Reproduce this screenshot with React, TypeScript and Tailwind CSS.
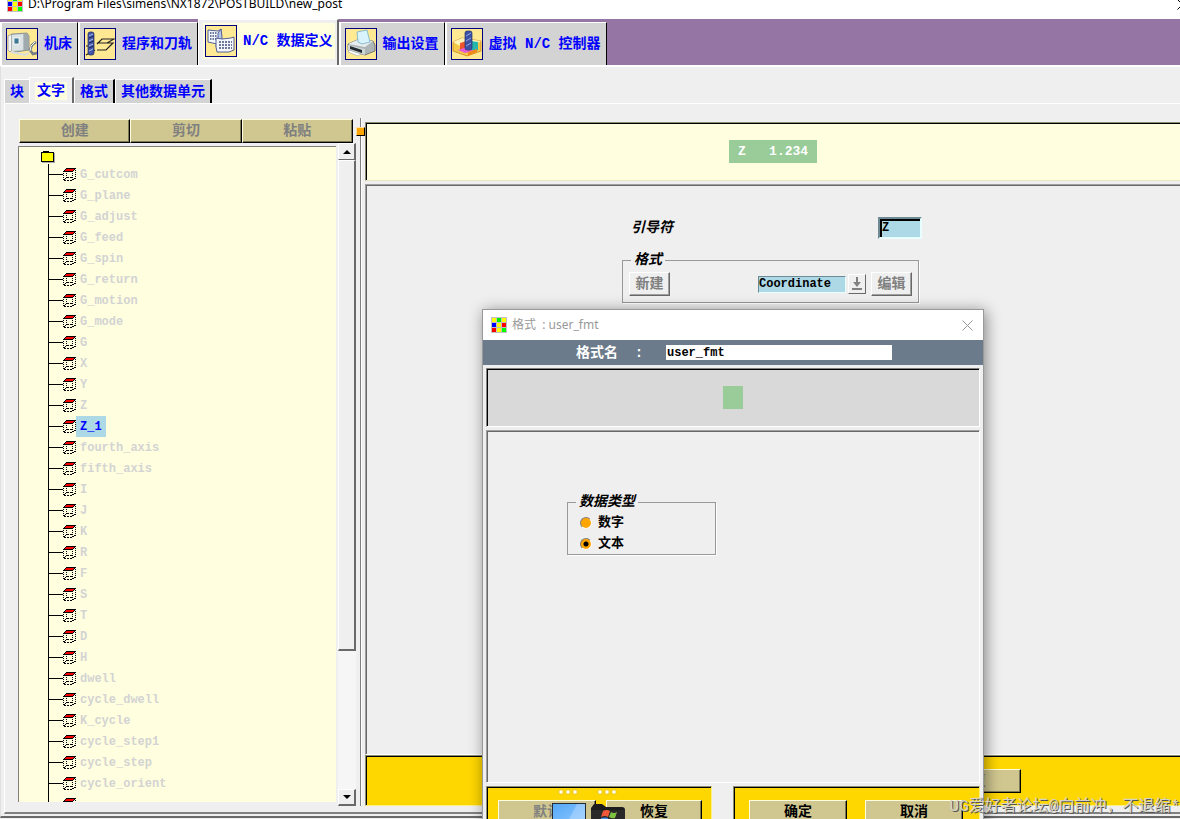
import { useState, type ReactNode } from "react";
import clsx from "clsx";

const WORDS = [
  "G_cutcom", "G_plane", "G_adjust", "G_feed", "G_spin", "G_return", "G_motion", "G_mode",
  "G", "X", "Y", "Z", "Z_1", "fourth_axis", "fifth_axis", "I", "J", "K", "R", "F", "S", "T",
  "D", "H", "dwell", "cycle_dwell", "K_cycle", "cycle_step1", "cycle_step", "cycle_orient", "",
];

const RAISED = "border border-t-white border-l-white border-r-[#696969] border-b-[#696969]";
const SUNKEN = "border border-t-[#a0a0a0] border-l-[#a0a0a0] border-r-white border-b-white shadow-[inset_1px_1px_0_#696969]";
const SUNKEN_BLACK = "border border-t-[#8c8c70] border-l-[#8c8c70] shadow-[inset_1px_1px_0_#000]";

function AppIcon() {
  const cells = ["#ff0", "#0e0", "#ff0", "#00f", "#ff0", "#f00", "#f00", "#ff0", "#0f0"];
  return (
    <svg width="16" height="16" viewBox="0 0 16 16" className="shrink-0" shapeRendering="crispEdges" aria-hidden>
      <rect width="16" height="16" fill="#c0c0c0" />
      {cells.map((fill, i) => (
        <rect key={i} x={1 + (i % 3) * 5} y={1 + Math.floor(i / 3) * 5} width="4" height="4" fill={fill} />
      ))}
    </svg>
  );
}

function IconFrame({ children }: { children: ReactNode }) {
  return (
    <svg width="32" height="32" viewBox="0 0 32 32" className="shrink-0" aria-hidden>
      <rect x="0.5" y="0.5" width="31" height="31" fill="#ffe993" stroke="#000080" />
      {children}
    </svg>
  );
}

function MachineIcon() {
  return (
    <IconFrame>
      <path d="M2 8l4-2v16l-2 2-2-2z" fill="#f5f5f5" stroke="#888" strokeWidth="0.7" />
      <path d="M6 6l15-1 2 3v14l-13 2-4-2z" fill="#b4bdc0" stroke="#7b8588" strokeWidth="0.8" />
      <path d="M6 7l11-1v16l-11 1z" fill="#dce3e4" />
      <rect x="8" y="10" width="5" height="6" fill="#3c7891" stroke="#fff" strokeWidth="0.8" />
      <path d="M19 6v17M21 6v16" stroke="#8b9698" />
      <path d="M5 24l14 3 4-2" fill="none" stroke="#d9ddde" strokeWidth="2" />
      <path d="M30 14l-4 3-2 5 3 4 4-1" fill="none" stroke="#727e84" strokeWidth="2.6" />
      <path d="M29 14l-4 4-1 5" fill="none" stroke="#eef2f3" />
    </IconFrame>
  );
}

function ToolpathIcon() {
  return (
    <IconFrame>
      <path d="M2 18h6M2 27l9-5M13 16l5-5h12l-7 4H13M13 22h9l7-7H17" fill="none" stroke="#222" strokeWidth="1.2" />
      <rect x="4" y="4" width="6" height="23" rx="2" fill="#4354aa" stroke="#202957" strokeWidth="0.7" />
      <path d="M5 8l4-2M5 13l4-2M5 18l4-2M5 23l4-2" stroke="#a9c0ed" />
      <path d="M5 10l5-2M5 15l5-2M5 20l5-2" stroke="#202957" />
    </IconFrame>
  );
}

function DataIcon() {
  return (
    <IconFrame>
      <path d="M3 5l10 1 3-2v11l-4 4-9-2z" fill="#f4f7fd" stroke="#536096" />
      <path d="M16 4l-3 4v8l-2 5 2 6 4-3V12z" fill="#b8c8e8" stroke="#536096" />
      <path d="M11 13l6 1 9-1 3-1v13l-5 2H12l-1-5z" fill="#f5f7fd" stroke="#536096" />
      <path d="M5 8h7M5 11h7M5 14h6" stroke="#42517b" strokeWidth="1.5" strokeDasharray="1.5 1" />
      <path d="M14 17h13M14 20h13M14 23h13" stroke="#42517b" strokeWidth="1.5" strokeDasharray="2 1" />
    </IconFrame>
  );
}

function PrinterIcon() {
  return (
    <IconFrame>
      <path d="M3 16l9-4 16 1 2 4v6l-10 4L3 22z" fill="#aeb5b7" stroke="#5d6568" strokeWidth="0.8" />
      <path d="M3 16l9-4 16 1-8 6z" fill="#e8edee" />
      <path d="M13 14L12 4l10-2 3 12-8 2z" fill="#d9f3fc" stroke="#72afc7" strokeWidth="0.8" />
      <path d="M3 17l17 4v6L3 22z" fill="#cfd6d7" />
      <path d="M5 18l12 4v3L5 21z" fill="#252c2f" />
      <path d="M4 22l12 4-3 2-10-4z" fill="#fff" stroke="#90989b" strokeWidth="0.5" />
    </IconFrame>
  );
}

function ControllerIcon() {
  return (
    <IconFrame>
      <path d="M2 14l9-4 19 3v10L16 28 2 23z" fill="#f4c94a" stroke="#c47a12" strokeWidth="0.7" />
      <path d="M2 14l9-4 19 3-5 3-9 1-5 2z" fill="#fff4b8" />
      <path d="M9 15l7-2v10l-7-1z" fill="#ed552d" />
      <path d="M20 13l7 1v8l-7 2z" fill="#26b6ae" />
      <path d="M7 22l9-3 7 4-9 2z" fill="#e75cd5" />
      <path d="M17 24l9-3v3l-9 4z" fill="#f18a16" />
      <rect x="14" y="3" width="7" height="19" rx="2" fill="#3c51a6" stroke="#26336f" strokeWidth="0.7" />
      <path d="M15 8l5-3M15 13l5-3M15 18l5-3" stroke="#8ca8dc" />
    </IconFrame>
  );
}

function BlockIcon() {
  return (
    <svg width="13" height="13" viewBox="0 0 13 13" className="shrink-0" shapeRendering="crispEdges" aria-hidden>
      <path d="M3 1h9l-3 3H1z" fill="#f00" />
      <path d="M3 0.5h10M0 3.5h10M2 1.5h1M1 2.5h1M11 1.5h1M10 2.5h1" stroke="#000" />
      <path d="M0.5 5v8M9.5 5v8M12.5 2v9M3.5 5v5" stroke="#000" strokeDasharray="1 1" />
      <path d="M1 12.5h9M4 9.5h6" stroke="#000" strokeDasharray="2 1" />
      <path d="M10 11.5h1M11 10.5h1M2 10.5h1M1 11.5h1" stroke="#000" />
    </svg>
  );
}

function CloseIcon() {
  return (
    <svg width="11" height="11" viewBox="0 0 11 11" className="shrink-0" aria-hidden>
      <path d="M0.5 0.5l10 10M10.5 0.5l-10 10" stroke="currentColor" />
    </svg>
  );
}

const MAIN_TABS = [
  { label: "机床", icon: <MachineIcon /> },
  { label: "程序和刀轨", icon: <ToolpathIcon /> },
  { label: "N/C 数据定义", icon: <DataIcon /> },
  { label: "输出设置", icon: <PrinterIcon /> },
  { label: "虚拟 N/C 控制器", icon: <ControllerIcon /> },
];

function MainTabs() {
  const [active, setActive] = useState(2);
  return (
    <nav className="flex h-[46px] shrink-0 items-end bg-[#9575a3]">
      {MAIN_TABS.map((tab, i) =>
        i === active ? (
          <button key={tab.label} className="h-[46px] border-l border-t border-r-2 border-l-white border-t-white border-r-[#696969] bg-[#efefef] pr-[2px] pb-[3px] pl-1">
            <span className="flex items-center gap-[6px] bg-[#ffffdf] p-[2px] text-[14px] leading-[20px] font-bold whitespace-nowrap text-[#0000ff]">
              {tab.icon}
              {tab.label}
            </span>
          </button>
        ) : (
          <button
            key={tab.label}
            onClick={() => setActive(i)}
            className="flex h-[43px] items-center gap-[6px] border-l-2 border-t border-r border-l-white border-t-white border-r-black bg-[#d3d3d3] pr-[5px] pl-1 text-[14px] leading-[20px] font-bold whitespace-nowrap text-[#0000ff]"
          >
            {tab.icon}
            {tab.label}
          </button>
        ),
      )}
    </nav>
  );
}

function SubTabs() {
  const [active, setActive] = useState(1);
  return (
    <nav className="flex h-[26px] shrink-0 items-end">
      {["块", "文字", "格式", "其他数据单元"].map((label, i) =>
        i === active ? (
          <button key={label} className="h-[26px] border-l border-t border-r-2 border-l-white border-t-white border-r-[#696969] px-[5px] text-[14px] leading-[18px] font-bold text-[#0000ff]">
            <span className="block bg-[#ffffdf] px-[2px]">{label}</span>
          </button>
        ) : (
          <button
            key={label}
            onClick={() => setActive(i)}
            className={clsx(
              "h-[24px] border-l border-t border-l-white border-t-white bg-[#d3d3d3] px-[5px] text-[14px] leading-[22px] font-bold text-[#0000ff]",
              i === 0 ? "" : "border-r-2 border-r-black",
            )}
          >
            {label}
          </button>
        ),
      )}
    </nav>
  );
}

function KhakiButton({ children, className, disabled }: { children: ReactNode; className?: string; disabled?: boolean }) {
  return (
    <button
      disabled={disabled}
      className={clsx(
        "h-[24px] border border-t-[#ffffdf] border-l-[#ffffdf] border-r-black border-b-black bg-[#d0c790] text-[14px] leading-[22px] font-bold shadow-[inset_-1px_-1px_0_#7d7856]",
        disabled ? "text-[#808080]" : "text-black",
        className,
      )}
    >
      {children}
    </button>
  );
}

function GrayButton({ children }: { children: ReactNode }) {
  return (
    <button
      type="button"
      className="h-[24px] w-[41px] border border-t-white border-l-white border-r-[#696969] border-b-[#696969] text-[14px] leading-[22px] font-bold text-[#808080] shadow-[inset_-1px_-1px_0_#a0a0a0]"
    >
      {children}
    </button>
  );
}

function ScrollBar() {
  return (
    <div className="flex w-[18px] shrink-0 flex-col bg-[#f6f6f6]">
      <button aria-label="Up" className={clsx(RAISED, "flex h-[17px] items-center justify-center border-r-2 bg-[#efefef]")}>
        <svg width="8" height="4" viewBox="0 0 8 4" aria-hidden><path d="M4 0l4 4H0z" /></svg>
      </button>
      <div className="flex-1">
        <div className={clsx(RAISED, "h-[78%] border-r-2 border-b-2 bg-[#efefef]")} />
      </div>
      <button aria-label="Down" className={clsx(RAISED, "flex h-[17px] items-center justify-center border-r-2 border-b-2 bg-[#efefef]")}>
        <svg width="8" height="4" viewBox="0 0 8 4" aria-hidden><path d="M0 0h8L4 4z" /></svg>
      </button>
    </div>
  );
}

function WordTree() {
  const [selected, setSelected] = useState("Z_1");
  return (
    <div className="flex w-[338px] shrink-0 flex-col pt-px">
      <div className="mr-[3px] ml-px grid grid-cols-3">
        <KhakiButton disabled>创建</KhakiButton>
        <KhakiButton disabled>剪切</KhakiButton>
        <KhakiButton disabled>粘贴</KhakiButton>
      </div>
      <div className="flex min-h-0 flex-1">
        <div className="mt-[3px] mr-[2px] mb-1 min-w-0 flex-1 overflow-hidden border-t border-l border-[#808080] bg-[#ffffdf]">
          <div className="flex h-[17px] pt-1 pl-[22px]">
            <svg width="14" height="12" viewBox="0 0 14 12" shapeRendering="crispEdges" aria-hidden>
              <path d="M1 11.5h13M13.5 2v10" stroke="#aaa" />
              <path d="M2.5 2V0.5h5V2" fill="#ff0" stroke="#000" />
              <rect x="0.5" y="1.5" width="12" height="9" fill="#ff0" stroke="#000" />
            </svg>
          </div>
          <ul className="ml-[29px]">
            {WORDS.map((word) => (
              <li key={word} className="flex h-[21px] items-center border-l border-black">
                <span className="h-px w-[14px] bg-black" />
                <BlockIcon />
                {word && (
                  <button
                    onClick={() => setSelected(word)}
                    className={clsx(
                      "h-[21px] px-1 pt-[2px] text-[12px] leading-[19px] font-bold",
                      word === selected ? "bg-[#add8e6] text-[#0000ff]" : "text-[#d3d3d3]",
                    )}
                  >
                    {word}
                  </button>
                )}
              </li>
            ))}
          </ul>
        </div>
        <ScrollBar />
      </div>
    </div>
  );
}

function Sash() {
  return (
    <div className="relative flex w-[9px] shrink-0 justify-center">
      <div className="w-[2px] border-l border-[#808080] bg-white" />
      <div className="absolute top-[9px] left-0 h-[9px] w-[9px] border border-t-[#ffe0a0] border-l-[#ffe0a0] border-r-black border-b-black bg-[#ffa500]" />
    </div>
  );
}

function WordEditor() {
  return (
    <div className="flex min-w-0 flex-1 flex-col pt-1">
      <div className={clsx(SUNKEN_BLACK, "flex h-[59px] shrink-0 items-center justify-center border-r-0 border-b-[#e6e6c0] bg-[#ffffdf]")}>
        <span className="bg-[#99cc99] px-[9px] text-[13px] leading-[23px] font-bold whitespace-pre text-white">Z   1.234</span>
      </div>
      <div className={clsx(SUNKEN, "mt-[3px] flex-1 border-r-0 pt-8 pr-[2px]")}>
        <form className="mx-auto w-[300px]">
          <div className="flex items-center justify-between pl-[9px]">
            <label htmlFor="leader" className="text-[14px] leading-[20px] font-bold italic">引导符</label>
            <input
              id="leader"
              defaultValue="Z"
              className="h-[22px] w-[44px] border-2 border-t-[#6e8a94] border-r-[#e8ffff] border-b-[#e8ffff] border-l-[#6e8a94] bg-[#add8e6] pl-[2px] text-[12px] leading-[18px] font-bold shadow-[inset_2px_2px_0_#000] outline-none"
            />
          </div>
          <fieldset className="mt-[11px] mr-[3px] border border-[#999] px-[6px] pt-[2px] pb-[6px] shadow-[1px_1px_0_#fff]">
            <legend className="ml-[2px] px-[3px] text-[14px] leading-[20px] font-bold italic">格式</legend>
            <div className="flex items-center">
              <GrayButton>新建</GrayButton>
              <select
                aria-label="格式"
                className="ml-auto h-[17px] w-[88px] appearance-none border border-t-[#6e8a94] border-r-[#e8ffff] border-b-[#e8ffff] border-l-[#6e8a94] bg-[#add8e6] text-[12px] leading-[15px] font-bold outline-none"
              >
                <option>Coordinate</option>
              </select>
              <button type="button" aria-label="选择" className={clsx(RAISED, "mr-[5px] ml-[2px] flex h-[20px] w-[18px] items-center justify-center")}>
                <svg width="10" height="14" viewBox="0 0 10 14" aria-hidden>
                  <path d="M4 0h2v5h3L5 10 1 5h3z" fill="#808080" />
                  <path d="M0 12h10" stroke="#808080" strokeWidth="2" />
                </svg>
              </button>
              <GrayButton>编辑</GrayButton>
            </div>
          </fieldset>
        </form>
      </div>
      <div className={clsx(SUNKEN_BLACK, "grid h-[51px] shrink-0 grid-cols-2 justify-items-center border-r-0 border-b-[#ffef80] bg-[#ffd700] pt-[13px] pr-[6px]")}>
        <KhakiButton disabled className="w-[98px]">默认</KhakiButton>
        <KhakiButton disabled className="w-[98px]">恢复</KhakiButton>
      </div>
    </div>
  );
}

function TypeRadio({ label, checked }: { label: string; checked?: boolean }) {
  return (
    <label className="flex h-[21px] items-center gap-[6px] text-[13px] leading-[21px] font-bold">
      <input
        type="radio"
        name="data-type"
        defaultChecked={checked}
        className="h-[12px] w-[12px] appearance-none rounded-full border border-t-[#808080] border-r-white border-b-white border-l-[#808080] bg-[#ffa500] checked:bg-[radial-gradient(circle,#000_2px,#ffa500_3px)]"
      />
      {label}
    </label>
  );
}

function FormatDialog() {
  return (
    <section
      role="dialog"
      aria-label="user_fmt"
      className="absolute top-[309px] left-[482px] flex h-[530px] w-[502px] flex-col border border-[#999] bg-[#efefef] shadow-[2px_2px_14px_rgba(0,0,0,0.45)]"
    >
      <header className="flex h-[30px] shrink-0 items-center bg-white pr-[10px] pl-2 font-['Noto_Sans','Noto_Sans_CJK_SC',sans-serif] text-[12px] text-[#999]">
        <AppIcon />
        <span className="ml-[5px] flex-1">格式 &nbsp;: user_fmt</span>
        <button aria-label="关闭"><CloseIcon /></button>
      </header>
      <div className="flex h-[25px] shrink-0 items-center bg-[#6c7b8b]">
        <label htmlFor="format-name" className="ml-[93px] w-[90px] text-[14px] leading-[20px] font-bold whitespace-pre text-white">
          格式名  :
        </label>
        <input
          id="format-name"
          defaultValue="user_fmt"
          className="h-[15px] w-[226px] bg-white px-px pt-px text-[12px] leading-[14px] font-bold outline-none"
        />
      </div>
      <div className="flex min-h-0 flex-1 flex-col px-[3px] pt-[3px]">
        <div className="flex h-[59px] shrink-0 items-center justify-center border border-t-[#808080] border-r-white border-b-white border-l-[#808080] bg-[#d9d9d9] shadow-[inset_1px_1px_0_#000]">
          <div className="h-[23px] w-[20px] bg-[#99cc99]" />
        </div>
        <div className={clsx(SUNKEN, "mt-[3px] h-[353px] shrink-0 pt-[61px] pl-20")}>
          <fieldset className="w-[149px] border border-[#999] px-3 shadow-[1px_1px_0_#fff]">
            <legend className="-ml-1 px-[3px] text-[14px] leading-[20px] font-bold italic">数据类型</legend>
            <TypeRadio label="数字" />
            <TypeRadio label="文本" checked />
          </fieldset>
        </div>
        <div className="mt-[3px] flex flex-1 justify-between">
          <div className={clsx(SUNKEN_BLACK, "flex w-[226px] gap-[10px] border-r-[#ffef80] bg-[#ffd700] pt-[13px] pl-[11px]")}>
            <KhakiButton disabled className="w-[98px]">默认</KhakiButton>
            <KhakiButton className="w-[96px]">恢复</KhakiButton>
          </div>
          <div className={clsx(SUNKEN_BLACK, "flex w-[247px] gap-[18px] border-r-[#ffef80] bg-[#ffd700] pt-[13px] pl-[15px]")}>
            <KhakiButton className="w-[98px]">确定</KhakiButton>
            <KhakiButton className="w-[98px]">取消</KhakiButton>
          </div>
        </div>
      </div>
    </section>
  );
}

/** Desktop shortcuts that peek over the bottom edge of the window. */
function DockIcons() {
  return (
    <svg width="80" height="32" viewBox="0 0 80 32" className="absolute bottom-0 left-[550px]" aria-hidden>
      <defs>
        <linearGradient id="screen" x1="0" y1="0" x2="1" y2="1">
          <stop offset="0" stopColor="#55a8f8" />
          <stop offset="1" stopColor="#8cc8ff" />
        </linearGradient>
      </defs>
      {[11, 18, 25, 50, 57, 64].map((x) => (
        <circle key={x} cx={x} cy="5" r="2.3" fill="#fffbe0" stroke="#d8b100" strokeWidth="0.6" />
      ))}
      <rect x="2.5" y="16.5" width="33" height="20" fill="url(#screen)" stroke="#252b33" />
      <path d="M27 17h8v15H19z" fill="#fff" opacity="0.25" />
      <path d="M41 32V21l3-4h8l4 3h16q3 0 3 3v9z" fill="#1c1c1c" />
      <path d="M41 23h34v9H41z" fill="#292929" />
      <path d="M53 24q4-2 7 0l-2 6q-3-2-7 0z" fill="#f0583a" />
      <path d="M61 25q3 2 6 0l-2 6q-3 1-6-1z" fill="#7ec242" />
      <path d="M51 31q4-1 7 0v1h-7z" fill="#4a90e2" />
    </svg>
  );
}

export default function App() {
  return (
    <div className="relative flex h-screen flex-col overflow-hidden bg-[#efefef] font-['Liberation_Mono','Noto_Sans_CJK_SC',monospace] text-black">
      <header className="-mt-[11px] flex h-[30px] shrink-0 items-center bg-white pl-[7px] font-['Noto_Sans','Noto_Sans_CJK_SC',sans-serif] text-[12px]">
        <AppIcon />
        <span className="ml-[5px] flex-1">D:\Program Files\simens\NX1872\POSTBUILD\new_post</span>
        <button aria-label="关闭" className="-mr-2"><CloseIcon /></button>
      </header>
      <MainTabs />
      <main className="mb-px flex min-h-0 flex-1 flex-col border-t-2 border-b-2 border-l border-t-white border-b-[#696969] border-l-[#e0e0e0] pt-[10px] pl-[3px]">
        <SubTabs />
        <div className="mb-[2px] flex min-h-0 flex-1 border-t border-b-2 border-l border-t-white border-b-[#808080] border-l-white pt-[14px] pb-[6px] pl-[13px]">
          <WordTree />
          <Sash />
          <WordEditor />
        </div>
      </main>
      <FormatDialog />
      <DockIcons />
      <p className="absolute right-0 bottom-0 text-[16px] leading-[24px] whitespace-nowrap text-[#d8d4c4] [text-shadow:1px_1px_0_#555]">
        UG爱好者论坛@向前冲，不退缩*
      </p>
    </div>
  );
}
